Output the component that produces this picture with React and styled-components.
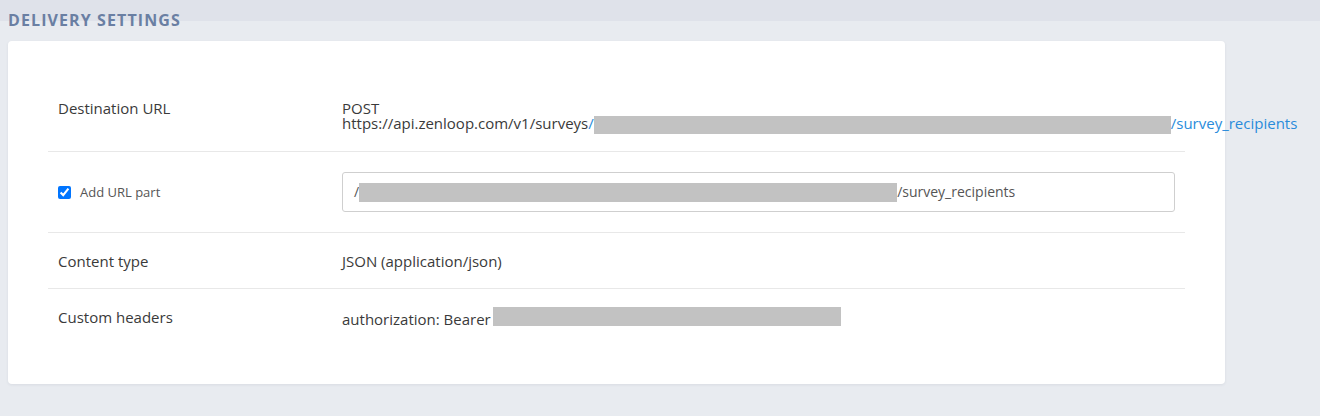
import React from "react";
import styled, { createGlobalStyle } from "styled-components";

const GlobalStyle = createGlobalStyle`
  html, body {
    margin: 0;
    padding: 0;
    background: #e8ebf0;
  }
  * {
    box-sizing: border-box;
  }
`;

const Page = styled.div`
  width: 1320px;
  height: 416px;
  overflow: hidden;
  background: linear-gradient(#dfe2ea 0 21px, #e8ebf0 21px);
  font-family: "Open Sans", "Liberation Sans", sans-serif;
  padding: 0 0 0 8px;
`;

const Heading = styled.h2`
  margin: 0;
  padding-top: 10px;
  height: 41px;
  font-family: "Open Sans", "Liberation Sans", sans-serif;
  font-weight: 700;
  font-size: 16px;
  line-height: 20px;
  letter-spacing: 1.1px;
  color: #6a7fa3;
  text-transform: uppercase;
`;

const Card = styled.section`
  width: 1217px;
  background: #ffffff;
  border-radius: 4px;
  box-shadow: 0 1px 3px rgba(40, 55, 80, 0.08);
  padding: 40px 40px 38px;
`;

const Row = styled.div`
  display: grid;
  grid-template-columns: 284px 1fr;
  align-items: ${(p) => (p.$center ? "center" : "start")};
  padding: ${(p) => p.$pad || "18px 10px 17px"};
  border-bottom: 1px solid #e8e8e8;
  color: #333;
  font-size: 15px;
  line-height: 20px;

  &:last-child {
    border-bottom: none;
  }
`;

const Label = styled.div`
  color: #3a3a3a;
`;

const CheckLabel = styled.label`
  display: flex;
  align-items: center;
  gap: 9px;
  font-size: 13px;
  color: #555;

  input {
    margin: 0;
    width: 13px;
    height: 13px;
  }
`;

const Value = styled.div`
  color: #3a3a3a;
  line-height: ${(p) => p.$lh || "20px"};
  padding: ${(p) => p.$pad || "0"};
  white-space: nowrap;
`;

const Line = styled.div`
  height: ${(p) => p.$h || 15}px;
`;

const Link = styled.span`
  color: #2a8cdb;
`;

const Redacted = styled.span`
  display: inline-block;
  vertical-align: ${(p) => p.$va || "-4px"};
  width: ${(p) => p.$w}px;
  height: ${(p) => p.$h || 18}px;
  margin-left: ${(p) => p.$ml || 0}px;
  background: #c2c2c2;
`;

const Field = styled.div`
  height: 40px;
  border: 1px solid #cfcfcf;
  border-radius: 3px;
  padding: 0 11px;
  display: flex;
  align-items: center;
  color: #555;
  font-size: 14px;
  white-space: nowrap;
`;

export default function App() {
  return (
    <Page>
      <GlobalStyle />
      <Heading>Delivery Settings</Heading>
      <Card>
        <Row $pad="17px 10px 17px">
          <Label>Destination URL</Label>
          <Value $lh="15px" $pad="3px 0 0">
            <Line>POST</Line>
            <Line $h={18}>
              https://api.zenloop.com/v1/surveys
              <Link>
                /<Redacted $w={577} $va="-5px" />
                /survey_recipients
              </Link>
            </Line>
          </Value>
        </Row>
        <Row $center $pad="20px 10px">
          <CheckLabel>
            <input type="checkbox" defaultChecked />
            Add URL part
          </CheckLabel>
          <Field>
            /<Redacted $w={538} $h={19} $va="0" />
            /survey_recipients
          </Field>
        </Row>
        <Row>
          <Label>Content type</Label>
          <Value>JSON (application/json)</Value>
        </Row>
        <Row>
          <Label>Custom headers</Label>
          <Value>
            authorization: Bearer
            <Redacted $w={348} $h={19} $va="-1px" $ml={2} />
          </Value>
        </Row>
      </Card>
    </Page>
  );
}
